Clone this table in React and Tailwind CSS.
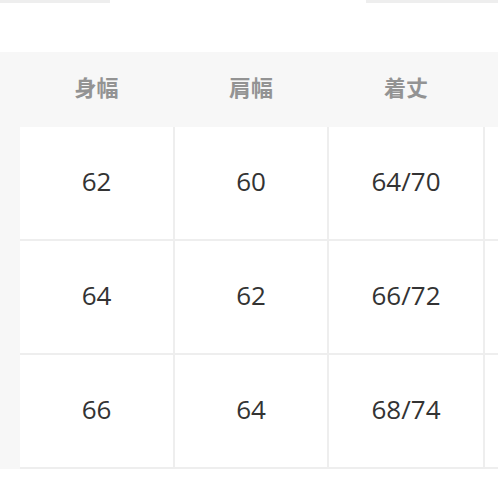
const headers = ["身幅", "肩幅", "着丈"];
const rows = [
	["62", "60", "64/70"],
	["64", "62", "66/72"],
	["66", "64", "68/74"],
];
const widths = ["w-[153px]", "w-[152px]", "w-[154px]"];

export default function App() {
	return (
		<div
			className="w-[498px] h-[498px] bg-white overflow-hidden"
			style={{ fontFamily: '"Open Sans", "Noto Sans CJK JP", sans-serif' }}
		>
			{/* top edge of the cards above */}
			<div className="flex justify-between h-[52px]">
				<div className="w-[110px] h-[3px] bg-[#eeeeee]" />
				<div className="w-[132px] h-[3px] bg-[#eeeeee]" />
			</div>

			<div className="flex bg-[#f7f7f7]">
				{/* cut-off first column */}
				<div className="w-[20px] shrink-0" />

				<div className="flex-1 flex flex-col">
					{/* header */}
					<div className="flex h-[75px] items-center pb-[6px]">
						{headers.map((h, i) => (
							<div
								key={h}
								className={`${widths[i]} shrink-0 text-center text-[22px] font-bold text-[#939393] mr-[2px]`}
								style={{ fontFamily: '"Noto Sans CJK JP", sans-serif' }}
							>
								{h}
							</div>
						))}
					</div>

					{/* body */}
					<div className="flex flex-col gap-[2px] bg-[#eeeeee] pb-[2px]">
						{rows.map((r, ri) => (
							<div key={ri} className="flex h-[112px]">
								{r.map((v, i) => (
									<div
										key={i}
										className={`${widths[i]} shrink-0 bg-white flex items-center justify-center text-[26px] text-[#333333] pb-[4px] mr-[2px]`}
									>
										{v}
									</div>
								))}
								<div className="flex-1 bg-white" />
							</div>
						))}
					</div>
				</div>
			</div>
		</div>
	);
}
